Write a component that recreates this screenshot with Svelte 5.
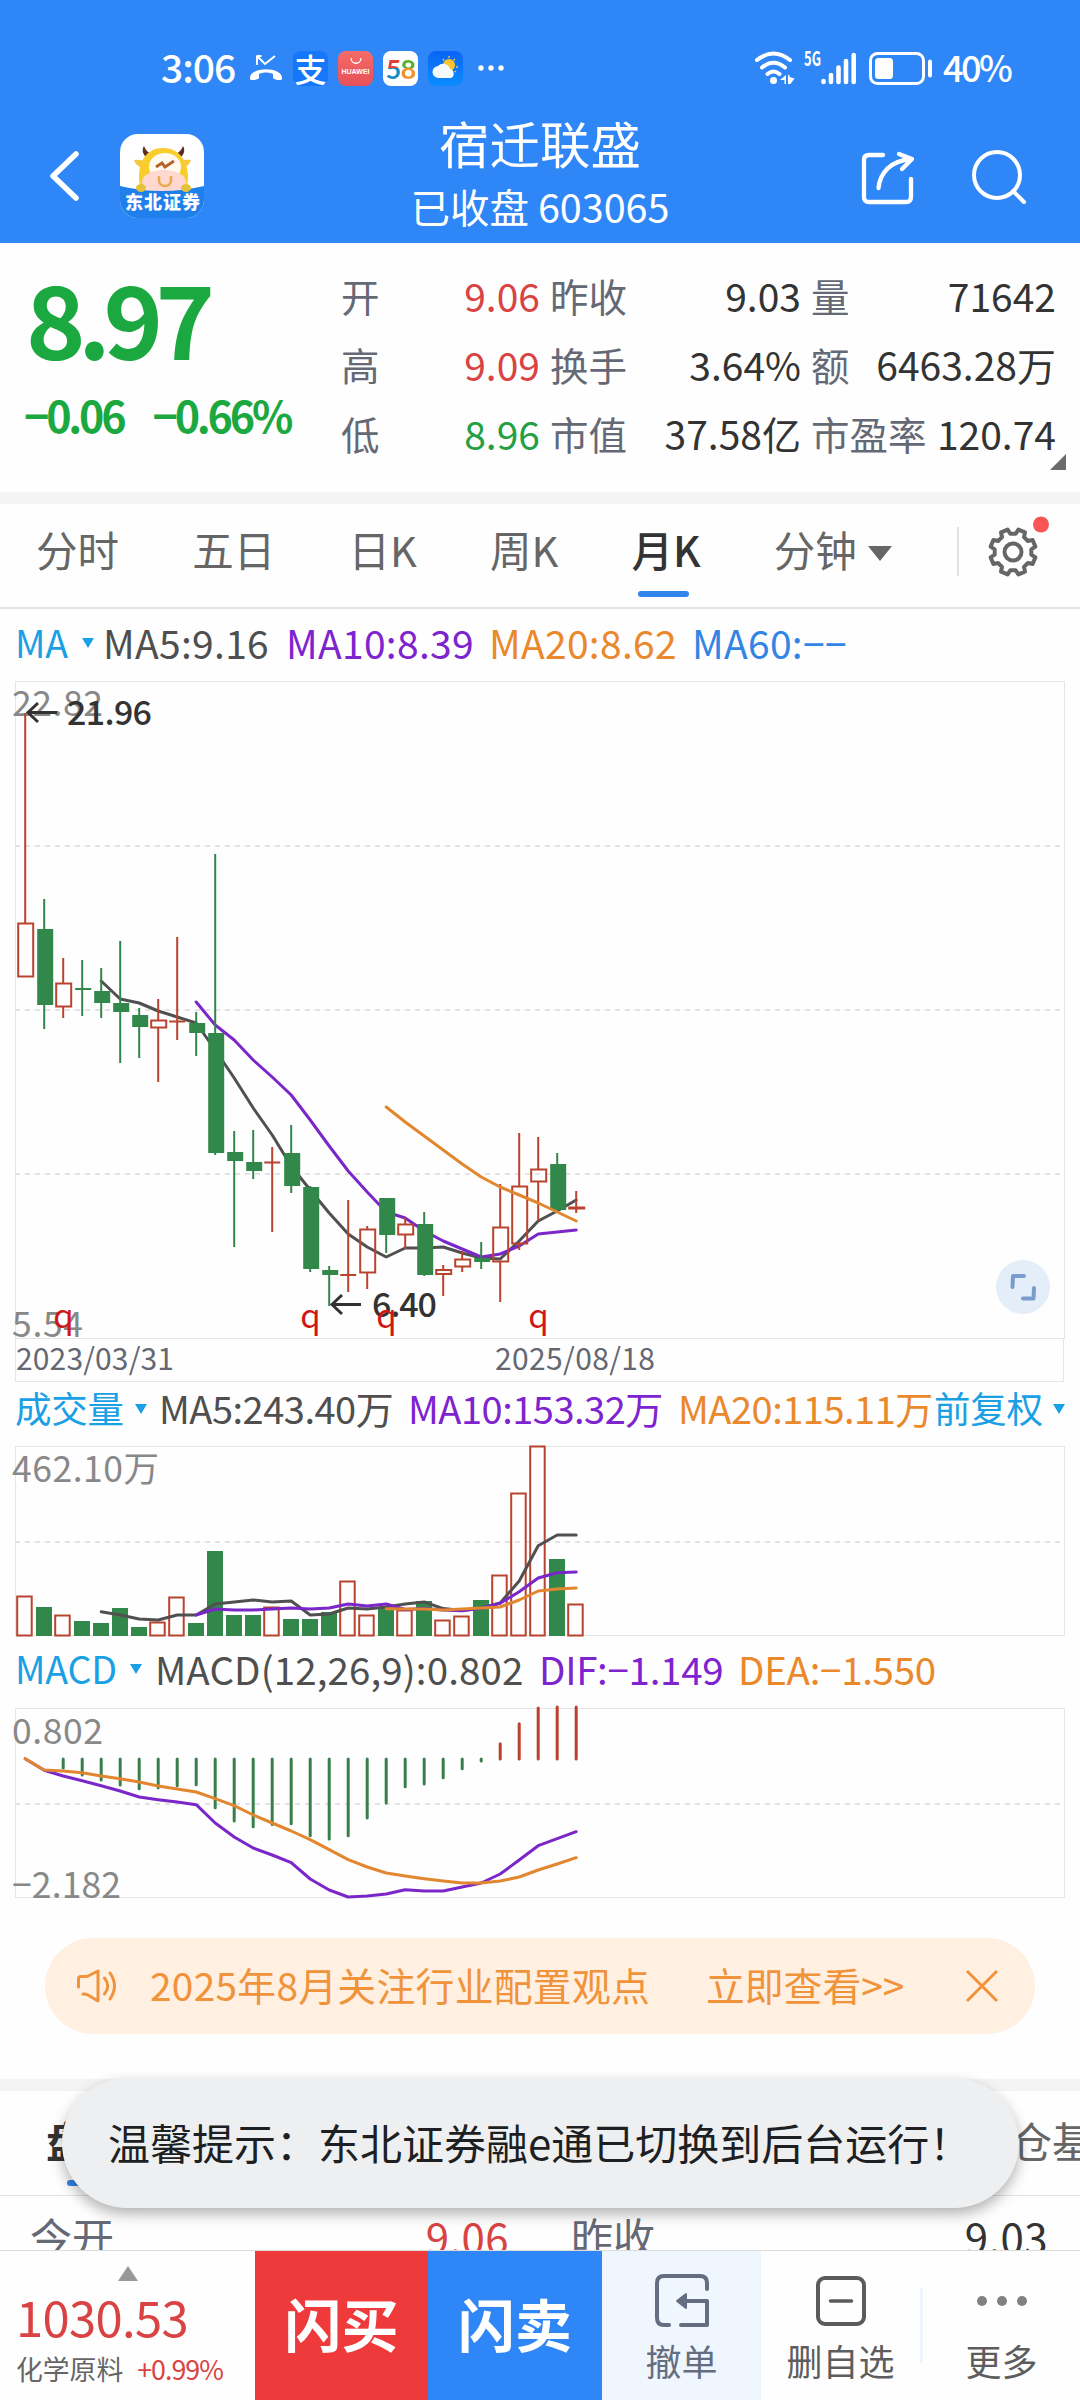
<script>
	const quotes = [
		{ label: '开', value: '9.06', tone: 'up' },
		{ label: '昨收', value: '9.03' },
		{ label: '量', value: '71642' },
		{ label: '高', value: '9.09', tone: 'up' },
		{ label: '换手', value: '3.64%' },
		{ label: '额', value: '6463.28万' },
		{ label: '低', value: '8.96', tone: 'down' },
		{ label: '市值', value: '37.58亿' },
		{ label: '市盈率', value: '120.74' }
	]

	const tabs = ['分时', '五日', '日K', '周K', '月K', '分钟']
	let currentTab = '月K'

	// colour, high, body top, body bottom, low
	const candles = [
		['r', 713, 923.5, 976.5, 976.5], ['g', 899, 929, 1005, 1029], ['r', 958, 983.5, 1006.5, 1018],
		['g', 960, 988, 990, 1016], ['g', 968, 991, 1003, 1018], ['g', 941, 1003, 1012, 1063],
		['g', 1008, 1015, 1027, 1058], ['r', 999, 1020.5, 1027.5, 1082], ['r', 937, 1021.5, 1021.5, 1040],
		['g', 1012, 1023, 1033, 1056], ['g', 854, 1033, 1153, 1155], ['g', 1131, 1152, 1161, 1247],
		['g', 1130, 1162, 1171, 1179], ['r', 1147, 1162.5, 1162.5, 1232], ['g', 1125, 1153, 1186, 1193],
		['g', 1186, 1187, 1269, 1272], ['g', 1266, 1270, 1275, 1306], ['r', 1200, 1275, 1275, 1292],
		['r', 1226, 1229.5, 1272.5, 1289], ['g', 1198, 1198, 1235, 1253], ['r', 1217, 1224.5, 1234.5, 1249],
		['g', 1212, 1224, 1275, 1276], ['r', 1265, 1270, 1274, 1296], ['r', 1251, 1259.5, 1266.5, 1272],
		['g', 1242, 1258, 1262, 1269], ['r', 1184, 1227.5, 1261.5, 1302], ['r', 1133, 1186.5, 1243.5, 1250],
		['r', 1137, 1169.5, 1181.5, 1221], ['g', 1153, 1164, 1210, 1212], ['r', 1191, 1207.5, 1208.5, 1213]
	]
	const volumes = [1596, 1607, 1615, 1621, 1623, 1608, 1627, 1622, 1597, 1623, 1551, 1615, 1615, 1607, 1619, 1619, 1612, 1581, 1615, 1608, 1610, 1601, 1620, 1616, 1600, 1575, 1493, 1446, 1559, 1604]
	const macd = [1759, 1759, 1768, 1775, 1780, 1785, 1788.7, 1787.7, 1785.7, 1784.7, 1807.7, 1821, 1826.7, 1824.5, 1823.7, 1835.7, 1839, 1835.7, 1818, 1803, 1786.7, 1784, 1777.7, 1768.7, 1761, 1743.7, 1723.7, 1708, 1707, 1707]

	const ma5 = [981, 999, 1003, 1011, 1017, 1023, 1050, 1078, 1108, 1135, 1166, 1190, 1213, 1234, 1247, 1257, 1248, 1248, 1247, 1253, 1258, 1259, 1241, 1221, 1211, 1200]
	const ma10 = [1002, 1025, 1040, 1060, 1077, 1095, 1120, 1146, 1171, 1192, 1212, 1218, 1231, 1241, 1249, 1257, 1254, 1246, 1234, 1232, 1230]
	const ma20 = [1107, 1122, 1136, 1150, 1164, 1177, 1187, 1195, 1203, 1212, 1221]
	const vol5 = [1611.7, 1615, 1619, 1620, 1615, 1615, 1604, 1602, 1600, 1602, 1601, 1615, 1614, 1608, 1609, 1607, 1604, 1602, 1608.6, 1610.6, 1608, 1603, 1581, 1545.7, 1535, 1535]
	const vol10 = [1615, 1609, 1610, 1610, 1609, 1608, 1609, 1608, 1604, 1606, 1604, 1609.5, 1608.5, 1610, 1610.7, 1608.3, 1603.3, 1591.7, 1578, 1572.7, 1572]
	const vol20 = [1608.7, 1609, 1609, 1610, 1609, 1608, 1607, 1600, 1591, 1589, 1588]
	const dif = [1758.7, 1770.3, 1776, 1780.7, 1785.7, 1791, 1797, 1799.7, 1802, 1804.7, 1823, 1837, 1848, 1855, 1862.7, 1879, 1890, 1897, 1896, 1894, 1889.7, 1891, 1891, 1887, 1883, 1874, 1860, 1845.7, 1838.7, 1831.7]
	const dea = [1758.7, 1770, 1771, 1772.7, 1776, 1778.7, 1782, 1786, 1789, 1792, 1798.7, 1805.7, 1815, 1823, 1831, 1839.7, 1849.7, 1859.7, 1867, 1873, 1876, 1878.7, 1881, 1883, 1883, 1881, 1877, 1870, 1864, 1857.7]

	const px = (i) => 25.2 + i * 19

	// every series ends on the last candle
	const line = (values) => values.map((y, i) => `${px(i + 30 - values.length)},${y}`).join(' ')

	const gear = () => {
		const pts = []
		for (let i = 0; i < 8; i++) {
			for (const [r, a] of [[23, -9], [23, 9], [18.5, 14], [18.5, 31]]) {
				const t = ((i * 45 + a + 22.5) * Math.PI) / 180
				pts.push(`${(26 + r * Math.sin(t)).toFixed(1)},${(26 - r * Math.cos(t)).toFixed(1)}`)
			}
		}
		return pts.join(' ')
	}
</script>

<main>
	<header>
		<div class="status">
			<span class="time">3:06</span>
			<svg class="missed" width="34" height="28" viewBox="0 0 34 28">
				<path d="M8 2v9M7.500 2h5M8 2l8 8L26 2" fill="none" stroke="#fff" stroke-width="2" />
				<path d="M1 25c-2-13 34-13 32 0 0 2-8 1-9-1v-4c-4-2-10-2-14 0v4c-1 2-9 3-9 1z" fill="#fff" />
			</svg>
			<span class="app pay">支</span>
			<span class="app huawei"><svg width="14" height="8" viewBox="0 0 14 8"><path d="M2 1c0 7 10 7 10 0" fill="none" stroke="#fff" stroke-width="1.300" /></svg>HUAWEI</span>
			<span class="app wuba"><b class="five">5</b><b class="eight">8</b></span>
			<span class="app weather">
				<svg width="35" height="35" viewBox="0 0 35 35">
					<circle cx="21" cy="14" r="6" fill="#ffc52e" />
					<path d="M21 5v2M27 8l-1.500 1.500M30 16h-2M15 8l1.200 1.500M28 21l-1.500-1" stroke="#ffc52e" stroke-width="1.300" />
					<path d="M11 27a6 6 0 0 1-1-12 7 7 0 0 1 12 3 4.800 4.800 0 0 1 1 9z" fill="#f6faff" />
				</svg>
			</span>
			<svg class="dots" width="26" height="6" viewBox="0 0 26 6" fill="#fff"><circle cx="3" cy="3" r="2.700" /><circle cx="13" cy="3" r="2.700" /><circle cx="23" cy="3" r="2.700" /></svg>
			<svg class="signals" width="182" height="36" viewBox="753 50 182 36">
				<g fill="none" stroke="#fff" stroke-width="4" stroke-linecap="round">
					<path d="M757 60Q773.500 47 790 60M762 67.500Q773.500 58 785 67.500M767.500 74Q773.500 69 779.500 74" />
				</g>
				<circle cx="773.500" cy="80.500" r="3.500" fill="#fff" />
				<path d="M786 75v9h-1.500v-4H780zM788 84v-9h1.500v2l5 1.500-4 5.500z" fill="#fff" />
				<text x="804" y="66" font-size="20" font-weight="700" textLength="17" lengthAdjust="spacingAndGlyphs" fill="#fff">5G</text>
				<g stroke="#fff" stroke-width="4.600" stroke-linecap="round"><path d="M823.500 81v1M831 75v7M838.500 67.500v14.500M846 61v21M853.700 55v27" /></g>
				<rect x="870.500" y="53.500" width="53" height="30" rx="7" fill="none" stroke="#fff" stroke-width="3" />
				<rect x="875" y="58" width="18" height="21" rx="3.500" fill="#fff" />
				<path d="M930 61.500v14" stroke="#fff" stroke-width="4" stroke-linecap="round" />
			</svg>
			<span class="percent">40%</span>
		</div>
		<div class="titlebar">
			<svg class="back" width="34" height="54" viewBox="0 0 34 54"><path d="M28 5 5 27l23 22" fill="none" stroke="#fff" stroke-width="5.500" stroke-linecap="round" stroke-linejoin="round" /></svg>
			<svg class="brand" width="84" height="84" viewBox="0 0 84 84">
				<clipPath id="round"><rect width="84" height="84" rx="18" /></clipPath>
				<g clip-path="url(#round)">
					<rect width="84" height="84" fill="#fff" />
					<path d="M27 24c-5-4-5-9-3-12 2 5 5 7 7 8zM60 24c5-4 5-9 3-12-2 5-5 7-7 8z" fill="#5d2c22" />
					<path d="M14 26c6-1 10 0 12 4l-4 4c-3-1-7-4-8-8zM71 26c-6-1-10 0-12 4l4 4c3-1 7-4 8-8z" fill="#f6c840" />
					<path d="M20 52c-4-20 4-38 23-38s28 18 24 38z" fill="#f9cd2c" />
					<ellipse cx="45" cy="33" rx="16" ry="14" fill="#fffaf0" />
					<path d="m36 33 6-4 3 4 9-6" fill="none" stroke="#b5642c" stroke-width="3" />
					<ellipse cx="44" cy="48" rx="22" ry="12" fill="#ffd8d0" />
					<path d="M39 42v4c0 8 12 8 12 0v-4" fill="none" stroke="#e8aa4c" stroke-width="2.500" />
					<path d="M0 52q42 10 84 0v32H0z" fill="#1f80ec" />
					<ellipse cx="21" cy="54" rx="5" ry="4" fill="#e5c13a" /><ellipse cx="66" cy="54" rx="5" ry="4" fill="#e5c13a" />
					<text x="5" y="75" font-size="18" font-weight="900" textLength="75" fill="#fff">东北证券</text>
				</g>
			</svg>
			<div class="name">
				<h1>宿迁联盛</h1>
				<p>已收盘 603065</p>
			</div>
			<svg class="share" width="54" height="54" viewBox="0 0 54 54" fill="none" stroke="#fff" stroke-width="4.300" stroke-linecap="round" stroke-linejoin="round">
				<path d="M22 4H8q-5 0-5 5v37q0 5 5 5h37q5 0 5-5V28" />
				<path d="M17.500 37C19 22 29 10 50 8M38 3l13 5-10 10" />
			</svg>
			<svg class="search" width="56" height="56" viewBox="0 0 56 56" fill="none" stroke="#fff" stroke-width="4"><circle cx="26" cy="26" r="23" /><path d="m42 42 11 11" stroke-linecap="round" /></svg>
		</div>
	</header>

	<section class="quote">
		<div class="price">
			<strong>8.97</strong>
			<div class="change"><span>−0.06</span><span>−0.66%</span></div>
		</div>
		<div class="figures">
			{#each quotes as q}
				<div class="figure"><span>{q.label}</span><b class={q.tone}>{q.value}</b></div>
			{/each}
		</div>
		<svg class="corner" width="16" height="16" viewBox="0 0 16 16"><path d="M16 0v16H0z" fill="#6b6b6b" /></svg>
	</section>

	<nav>
		{#each tabs as tab}
			<button class:active={tab === currentTab} on:click={() => (currentTab = tab)}>{tab}</button>
		{/each}
		<svg class="more-minutes" width="24" height="15" viewBox="0 0 24 15"><path d="M0 0h24L12 15z" fill="#666" /></svg>
		<i class="split"></i>
		<svg class="gear" width="62" height="62" viewBox="0 -10 62 62">
			<polygon points={gear()} fill="none" stroke="#666" stroke-width="4" stroke-linejoin="round" />
			<circle cx="26" cy="26" r="8.500" fill="none" stroke="#666" stroke-width="4" />
			<circle cx="54" cy="-1.500" r="8" fill="#f85555" />
		</svg>
	</nav>

	<div class="legend ma">
		<span class="pick">MA</span><i class="caret"></i>
		<span class="c5">MA5:9.16</span><span class="c10">MA10:8.39</span><span class="c20">MA20:8.62</span><span class="c60">MA60:−−</span>
	</div>

	<svg class="chart" width="1080" height="704" viewBox="0 680 1080 704">
		<path class="frame" d="M15.500 681.500H1064.500V1338.500H15.500zM15.500 1338.500V1381.500H1063.500V1338.500" />
		<path class="dash" d="M15 846H1060M15 1010H1060M15 1174H1060" />
		<text class="scale" x="12" y="716" textLength="91">22.82</text>
		<text class="scale" x="12" y="1337" textLength="71">5.54</text>
		<polyline class="l5" points={line(ma5)} />
		<polyline class="l10" points={line(ma10)} />
		{#each candles as [kind, high, top, bottom, low], i}
			{#if kind === 'g'}
				<path class="green" d="M{px(i)} {high}V{low}" />
				<rect class="fill" x={px(i) - 7} y={top} width="16" height={bottom - top} />
			{:else}
				<path class="red" d="M{px(i)} {high}V{top}M{px(i)} {bottom}V{low}" />
				{#if bottom > top}
					<rect class="hollow" x={px(i) - 7} y={top} width="15" height={bottom - top} />
				{:else}
					<path class="red" d="M{px(i) - 8} {top}h16" />
				{/if}
			{/if}
		{/each}
		<polyline class="l20" points={line(ma20)} />
		<path class="arrow" d="M57 712.500H28M38 703l-10 9.500 10 9.500M361 1304.500H332M342 1295l-10 9.500 10 9.500" />
		<text class="mark" x="67" y="725" textLength="85">21.96</text>
		<text class="mark" x="372" y="1317" textLength="65">6.40</text>
		{#each [2, 15, 19, 27] as i}
			<text class="q" x={px(i) - 10} y="1328">q</text>
		{/each}
		<text class="date" x="16" y="1370" textLength="158">2023/03/31</text>
		<text class="date" x="495" y="1370" textLength="160">2025/08/18</text>
		<circle cx="1023" cy="1287" r="27" fill="#e4eef9" />
		<path d="M1024 1276h-11l-.500 11M1034 1288l-.500 10.500h-10.500" fill="none" stroke="#7a9ccd" stroke-width="4" stroke-linecap="round" stroke-linejoin="round" />
	</svg>

	<div class="legend volume">
		<span class="pick">成交量</span><i class="caret"></i>
		<span class="c5">MA5:243.40万</span><span class="c10">MA10:153.32万</span><span class="c20">MA20:115.11万</span>
		<span class="pick">前复权</span><i class="caret"></i>
	</div>

	<svg class="chart" width="1080" height="194" viewBox="0 1444 1080 194">
		<path class="frame" d="M15.500 1446.500H1064.500V1635.500H15.500z" />
		<path class="dash" d="M15 1542H1060" />
		<text class="scale" x="12" y="1482" textLength="147">462.10万</text>
		{#each volumes as top, i}
			{#if candles[i][0] === 'g'}
				<rect class="fill" x={px(i) - 8.2} y={top} width="16" height={1636 - top} />
			{:else}
				<rect class="hollow" x={px(i) - 8} y={top + 0.5} width="14.500" height={1635 - top} />
			{/if}
		{/each}
		<polyline class="l5" points={line(vol5)} />
		<polyline class="l10" points={line(vol10)} />
		<polyline class="l20" points={line(vol20)} />
	</svg>

	<div class="legend macd">
		<span class="pick">MACD</span><i class="caret"></i>
		<span class="c5">MACD(12,26,9):0.802</span><span class="c10">DIF:−1.149</span><span class="c20">DEA:−1.550</span>
	</div>

	<svg class="chart" width="1080" height="196" viewBox="0 1705 1080 196">
		<path class="frame" d="M15.500 1708.500H1064.500V1897.500H15.500z" />
		<path class="dash" d="M15 1804H1060" />
		<text class="scale" x="12" y="1744" textLength="91">0.802</text>
		<text class="scale" x="12" y="1898" textLength="109">−2.182</text>
		{#each macd as end, i}
			{#if end !== 1759}
				<path class={end > 1759 ? 'bar falling' : 'bar rising'} d="M{px(i)} 1759V{end}" />
			{/if}
		{/each}
		<polyline class="l10" points={line(dif)} />
		<polyline class="l20" points={line(dea)} />
	</svg>

	<div class="notice">
		<svg width="42" height="34" viewBox="0 0 42 34" fill="none" stroke="#f0933a" stroke-width="3" stroke-linecap="round" stroke-linejoin="round">
			<path d="M2.500 18V10q0-2.500 2.500-2.500h6L22 2v30l-10-6q-2-1-5-1M28.500 9q6.500 8 0 16M34 4q9 13 0 26" />
		</svg>
		<span class="topic">2025年8月关注行业配置观点</span>
		<span class="go">立即查看&gt;&gt;</span>
		<svg width="34" height="34" viewBox="0 0 34 34"><path d="M2 2l30 30M32 2 2 32" stroke="#f0933a" stroke-width="3" /></svg>
	</div>

	<section class="detail">
		<div class="detail-tabs"><span class="on">盘口</span><span>持仓基金</span></div>
		<div class="detail-row">
			<span>今开</span><b class="up">9.06</b><span>昨收</span><b>9.03</b>
		</div>
	</section>

	<footer>
		<div class="index">
			<svg width="20" height="15" viewBox="0 0 20 15"><path d="M10 0l10 15H0z" fill="#999" /></svg>
			<strong>1030.53</strong>
			<p>化学原料<em>+0.99%</em></p>
		</div>
		<button class="buy">闪买</button>
		<button class="sell">闪卖</button>
		<div class="action cancel">
			<svg width="54" height="54" viewBox="0 0 54 54" fill="none" stroke="#646e80" stroke-width="4" stroke-linecap="round" stroke-linejoin="round">
				<path d="M52 15V9q0-7-7-7H9Q2 2 2 9v35q0 7 7 7h5M26 51h26V27H28" /><path d="M31 20v14l-9-7z" fill="#646e80" stroke-width="2" />
			</svg>
			<span>撤单</span>
		</div>
		<div class="action remove">
			<svg width="50" height="50" viewBox="0 0 50 50" fill="none" stroke="#5b5b5b" stroke-width="4"><rect x="2" y="2" width="46" height="46" rx="7" /><path d="M14.500 25h21" stroke-width="3.500" stroke-linecap="round" /></svg>
			<span>删自选</span>
		</div>
		<i class="rule"></i>
		<div class="action other">
			<svg width="52" height="50" viewBox="0 0 52 50" fill="#808080"><circle cx="6" cy="25" r="5" /><circle cx="26" cy="25" r="5" /><circle cx="46" cy="25" r="5" /></svg>
			<span>更多</span>
		</div>
	</footer>

	<div class="toast">温馨提示：东北证券融e通已切换到后台运行！</div>
</main>

<style>
	:global(body) {
		margin: 0;
		background: #fff;
	}

	main {
		position: relative;
		width: 1080px;
		height: 2400px;
		overflow: hidden;
		display: flex;
		flex-direction: column;
		font-family: "Noto Sans CJK SC", sans-serif;
		color: #333;
		background: #fefefe;
	}

	main > * {
		flex: none;
	}

	svg {
		display: block;
		flex: none;
	}

	h1, p {
		margin: 0;
		font-weight: 400;
	}

	button {
		border: 0;
		padding: 0;
		background: none;
		font: inherit;
		color: inherit;
	}

	b, i, em {
		font-weight: 400;
		font-style: normal;
	}

	span, button, strong {
		white-space: nowrap;
	}

	.up {
		color: #d94343;
	}

	header {
		height: 243px;
		background: #2f86f6;
		color: #fff;
	}

	.status {
		height: 36px;
		padding: 50px 0 0 161px;
		display: flex;
		align-items: center;
	}

	.time {
		width: 88px;
		margin-top: -5px;
		font-size: 39px;
		font-weight: 500;
		line-height: 36px;
		letter-spacing: -1px;
	}

	.missed {
		margin-right: 10px;
	}

	.app {
		width: 35px;
		height: 35px;
		margin-right: 10px;
		border-radius: 8px;
		overflow: hidden;
		display: flex;
		align-items: center;
		justify-content: center;
		line-height: 35px;
	}

	.pay {
		background: #1677fa;
		font-size: 32px;
		font-weight: 500;
	}

	.huawei {
		flex-direction: column;
		justify-content: flex-start;
		padding-top: 6px;
		height: 29px;
		background: linear-gradient(#f56c68, #e74f58);
		font: 700 7px/14px "Liberation Sans", sans-serif;
	}

	.wuba {
		background: #fff;
		font: 700 27px/35px Lato, sans-serif;
		letter-spacing: -1px;
	}

	.five {
		background: linear-gradient(#e43c36 50%, #1d8ac0 50%);
		background-clip: text;
		color: transparent;
		font-weight: 700;
	}

	.eight {
		background: linear-gradient(#52b32b 48%, #f0912d 48%);
		background-clip: text;
		color: transparent;
		font-weight: 700;
	}

	.weather {
		background: linear-gradient(#0a64f5, #0b8dff);
	}

	.dots {
		margin: 0 249px 0 5px;
	}

	.percent {
		margin: -4px 0 0 8px;
		font-size: 36px;
		font-weight: 500;
		line-height: 36px;
		letter-spacing: -2.5px;
	}

	.titlebar {
		height: 130px;
		margin-top: 25px;
		padding-left: 48px;
		display: flex;
		align-items: center;
	}

	.back {
		margin-right: 38px;
	}

	.brand {
		margin-right: 196px;
	}

	.name {
		width: 280px;
		text-align: center;
	}

	h1 {
		margin-top: -9px;
		font-size: 50.5px;
		line-height: 66px;
	}

	.name p {
		padding-top: 3px;
		font-size: 39.5px;
		line-height: 56px;
	}

	.share {
		margin: 4px 0 0 181px;
	}

	.search {
		margin: 2px 0 0 56px;
	}

	.quote {
		position: relative;
		height: 249px;
		border-bottom: 12px solid #f4f4f4;
		display: flex;
	}

	.price {
		width: 341px;
		color: #1ca840;
	}

	.price strong {
		display: block;
		margin: 15px 0 0 26px;
		font-size: 101px;
		font-weight: 700;
		line-height: 116px;
		letter-spacing: -7.5px;
	}

	.change {
		display: flex;
		gap: 29px;
		padding-left: 24px;
		margin-top: 12px;
		font-size: 43px;
		font-weight: 700;
		line-height: 56px;
		letter-spacing: -3.2px;
	}

	.figures {
		display: grid;
		grid-template-columns: 199px 251px 245px;
		grid-auto-rows: 69px;
		column-gap: 10px;
		padding-top: 18px;
	}

	.figure {
		display: flex;
		justify-content: space-between;
		font-size: 38.5px;
		line-height: 69px;
		color: #646975;
	}

	.figure b {
		color: #333;
		font-size: 39px;
	}

	.figure b.up {
		color: #d94343;
	}

	.figure b.down {
		color: #23a044;
	}

	.corner {
		position: absolute;
		right: 14px;
		bottom: 22px;
	}

	nav {
		height: 103px;
		border-bottom: 2px solid #e1e1e1;
		display: flex;
		align-items: center;
		padding-left: 36px;
		color: #666;
	}

	nav button {
		position: relative;
		height: 103px;
		padding-bottom: 13px;
		margin-right: 73.2px;
		font-size: 41.5px;
	}

	nav .active {
		color: #333;
		font-weight: 500;
	}

	.active::after {
		content: "";
		position: absolute;
		left: 7px;
		bottom: 10px;
		width: 51px;
		height: 6px;
		border-radius: 3px;
		background: #3385ee;
	}

	.more-minutes {
		margin: -4px 0 0 -62px;
	}

	.split {
		width: 2px;
		height: 49px;
		margin: -8px 28px 0 65px;
		background: #e2e2e2;
	}

	.gear {
		margin-top: -18px;
	}

	.legend {
		box-sizing: border-box;
		display: grid;
		align-items: center;
		padding-left: 15px;
		line-height: 40px;
	}

	.ma {
		grid-template-columns: 67px 21px 183px 203px 203px 160px;
		height: 71px;
		padding-bottom: 6px;
		font-size: 39px;
		letter-spacing: 0.3px;
	}

	.volume {
		grid-template-columns: 120px 24px 249px 270px 256px 119px 20px;
		height: 60px;
		padding-bottom: 13px;
		font-size: 38px;
		letter-spacing: -0.5px;
	}

	.macd {
		grid-template-columns: 115px 25px 384px 199px 210px;
		height: 67px;
		padding-bottom: 8px;
		font-size: 38.5px;
		letter-spacing: -0.3px;
	}

	.macd .c5 {
		letter-spacing: 0.1px;
	}

	.pick {
		color: #1aa0e4;
		font-size: 36.5px;
		letter-spacing: -0.2px;
	}

	.ma .pick, .macd .pick {
		font-size: 37.5px;
	}

	.caret {
		border: 6px solid transparent;
		border-top: 10px solid #1aa0e4;
		border-bottom: 0;
		width: 0;
		margin-top: 2px;
	}

	.c5 { color: #4f4f4f; }
	.c10 { color: #7e24cf; }
	.c20 { color: #ea882c; }
	.c60 { color: #3285e4; }

	.frame {
		fill: none;
		stroke: #e5e5e5;
	}

	.dash {
		stroke: #e3e3e3;
		stroke-width: 2;
		stroke-dasharray: 5 5;
	}

	polyline {
		fill: none;
		stroke-width: 3;
		stroke-linejoin: round;
		stroke-linecap: round;
	}

	.l5 { stroke: #505050; }
	.l10 { stroke: #7a26c8; }
	.l20 { stroke: #e2862f; }

	.green { stroke: #32854a; stroke-width: 2; }
	.fill { fill: #31884a; }
	.red { stroke: #b8432f; stroke-width: 2; }
	.hollow { fill: none; stroke: #b8432f; stroke-width: 2; }

	.bar { stroke-width: 3; stroke-linecap: round; }
	.rising { stroke: #bb402f; }
	.falling { stroke: #38804b; }

	.scale { font-size: 35.5px; fill: #888; }
	.mark { font-size: 34px; font-weight: 500; fill: #333; }
	.date { font-size: 30px; fill: #646872; }
	.q { font-size: 33px; fill: #cf1717; }
	.arrow { fill: none; stroke: #333; stroke-width: 3; }

	.notice {
		width: 926px;
		height: 96px;
		margin: 37px 0 45px 45px;
		padding-left: 31px;
		padding-right: 33px;
		border-radius: 48px;
		background: #fff0e2;
		color: #f0933a;
		font-size: 38.8px;
		display: flex;
		align-items: center;
	}

	.notice span {
		margin-top: -5px;
	}

	.notice .topic {
		width: 556px;
		margin-left: 32px;
		letter-spacing: 0.3px;
	}

	.go {
		width: 259px;
	}

	.detail {
		border-top: 12px solid #f4f4f4;
		height: 159px;
		overflow: hidden;
	}

	.detail-tabs {
		height: 104px;
		border-bottom: 1px solid #e2e2e2;
		display: flex;
		justify-content: space-between;
		font-size: 42px;
		line-height: 98px;
		color: #666;
		padding-left: 46px;
		margin-right: -56px;
	}

	.on {
		position: relative;
		color: #333;
		font-weight: 700;
	}

	.on::after {
		content: "";
		position: absolute;
		left: 21px;
		bottom: 9px;
		width: 51px;
		height: 6px;
		border-radius: 3px;
		background: #3385ee;
	}

	.detail-row {
		display: grid;
		grid-template-columns: 240px 239px 62px 237px 240px;
		padding: 10px 30px;
		font-size: 42px;
		line-height: 60px;
		color: #646975;
	}

	.detail-row b {
		text-align: right;
		letter-spacing: 0.4px;
	}

	.detail-row span:nth-of-type(2) {
		grid-column: 4;
	}

	.detail-row b:not(.up) {
		color: #333;
	}

	footer {
		height: 149px;
		border-top: 1px solid #ddd;
		display: flex;
		background: #fefefe;
	}

	.index {
		width: 239px;
		padding: 15px 0 0 16px;
		color: #d94343;
	}

	.index svg {
		margin-left: 102px;
	}

	.index strong {
		display: block;
		margin-top: 5px;
		font-size: 49px;
		font-weight: 400;
		line-height: 60px;
		letter-spacing: -0.7px;
	}

	.index p {
		margin-top: 3px;
		font-size: 26.8px;
		line-height: 40px;
		color: #666;
	}

	.index em {
		margin-left: 14px;
		color: #d94343;
		letter-spacing: -1px;
	}

	.buy, .sell {
		width: 173px;
		padding-bottom: 7px;
		color: #fff;
		font-size: 57px;
		font-weight: 700;
		background: #ee3a3a;
	}

	.sell {
		width: 174px;
		background: #2f86f6;
	}

	.action {
		width: 159px;
		display: flex;
		flex-direction: column;
		align-items: center;
		font-size: 36px;
		line-height: 50px;
		color: #5d5d5d;
	}

	.action svg {
		height: 54px;
		margin: 23px 0 7px;
	}

	.cancel {
		background: #eff6fe;
		color: #646e80;
	}

	.rule {
		width: 3px;
		height: 75px;
		margin-top: 37px;
		background: #eef5fc;
	}

	.other {
		width: 157px;
	}

	.toast {
		position: absolute;
		left: 62px;
		top: 2078px;
		width: 911px;
		height: 130px;
		padding-left: 46px;
		border-radius: 65px;
		background: #eeeff1;
		box-shadow: 0 6px 14px rgba(0, 0, 0, 0.3);
		font-size: 42px;
		line-height: 128px;
		color: #1d1f22;
	}
</style>
